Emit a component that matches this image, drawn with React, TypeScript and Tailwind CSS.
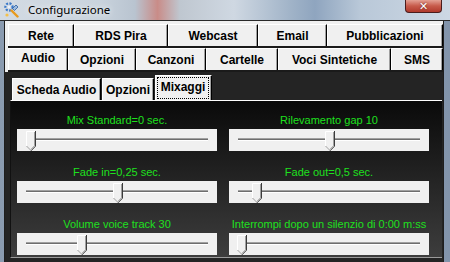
import React from "react";

const tabFont = "font-['Liberation_Sans',Arial,sans-serif] font-bold text-[12px] text-black";
const labelFont = "font-['Liberation_Sans',Arial,sans-serif] text-[11px]";

type Tab = { label: string; w: string; active?: boolean };

const row1: Tab[] = [
  { label: "Rete", w: "w-[66px]" },
  { label: "RDS Pira", w: "w-[94px]" },
  { label: "Webcast", w: "w-[90px]" },
  { label: "Email", w: "w-[69px]" },
  { label: "Pubblicazioni", w: "w-[116px]" },
];

const row2: Tab[] = [
  { label: "Audio", w: "w-[60px]", active: true },
  { label: "Opzioni", w: "w-[68px]" },
  { label: "Canzoni", w: "w-[70px]" },
  { label: "Cartelle", w: "w-[72px]" },
  { label: "Voci Sintetiche", w: "w-[113px]" },
  { label: "SMS", w: "w-[52px]" },
];

const sliders = [
  [
    { label: "Mix Standard=0 sec.", pos: "left-[9px]" },
    { label: "Rilevamento gap 10", pos: "left-[96px]" },
  ],
  [
    { label: "Fade in=0,25 sec.", pos: "left-[96px]" },
    { label: "Fade out=0,5 sec.", pos: "left-[23px]" },
  ],
  [
    { label: "Volume voice track 30", pos: "left-[60px]" },
    { label: "Interrompi dopo un silenzio di 0:00 m:ss", pos: "left-[8px]" },
  ],
];

function AppIcon() {
  return (
    <svg width="16" height="16" viewBox="0 0 16 16">
      <circle cx="5" cy="5" r="3.6" fill="none" stroke="#3a78c8" strokeWidth="2.2" strokeDasharray="2 1.4" />
      <circle cx="5" cy="5" r="1.3" fill="#e8f0fa" />
      <path d="M7.5 8.5 L13.5 14.5" stroke="#e89a1c" strokeWidth="2.4" strokeLinecap="round" />
      <path d="M12 3 L14 5 L10.5 8.5 L8.5 6.5 Z" fill="#9bbbe0" stroke="#2f5f9f" strokeWidth="0.8" />
      <circle cx="3" cy="13" r="1.6" fill="#f4c14a" />
    </svg>
  );
}

function OuterTab({ label, w, active }: Tab) {
  return (
    <div
      className={`${w} h-full flex items-center justify-center bg-[#f0f0f0] border-l border-t border-l-white border-t-white border-r border-r-black shadow-[inset_-1px_0_#a0a0a0] ${
        active ? "pb-[3px]" : ""
      } ${tabFont}`}
    >
      {label}
    </div>
  );
}

function InnerTab({ label, w, active }: Tab) {
  if (active) {
    return (
      <div className={`${w} h-[25px] bg-[#f0f0f0] border-l border-t border-l-white border-t-white border-r border-r-black shadow-[inset_-1px_0_#a0a0a0] p-[1px] pr-[2px]`}>
        <div className={`h-full border border-dotted border-black flex items-center justify-center pb-[2px] ${tabFont}`}>
          {label}
        </div>
      </div>
    );
  }
  return (
    <div
      className={`${w} h-[22px] flex items-center justify-center bg-[#f0f0f0] border-l border-t border-l-white border-t-white border-r border-r-black shadow-[inset_-1px_0_#a0a0a0] ${tabFont}`}
    >
      {label}
    </div>
  );
}

function Thumb({ className }: { className: string }) {
  return (
    <svg width="10" height="21" viewBox="0 0 10 21" className={className}>
      <path d="M0 0H10V15L5 20L0 15Z" fill="#f0f0f0" />
      <polyline points="0.5,15 0.5,0.5 9,0.5" fill="none" stroke="#ffffff" />
      <polyline points="0.5,15 5,19.5" fill="none" stroke="#a0a0a0" />
      <polyline points="8.5,1 8.5,14.8 5,18.3" fill="none" stroke="#a0a0a0" />
      <polyline points="9.5,0 9.5,15.2 5,19.8" fill="none" stroke="#3c3c3c" />
    </svg>
  );
}

function Slider({ label, pos }: { label: string; pos: string }) {
  return (
    <div className="w-[200px] flex flex-col">
      <div className={`h-[14px] leading-[14px] text-center text-[#1ee01e] whitespace-nowrap ${labelFont}`}>{label}</div>
      <div className="mt-[2px] h-[22px] bg-[#f0f0f0] relative">
        <div className="absolute left-[9px] right-[9px] top-[9px] h-[3px] border-t border-t-[#a0a0a0] bg-[#6e6e6e] border-b border-b-white" />
        <Thumb className={`absolute top-[2px] ${pos}`} />
      </div>
    </div>
  );
}

export default function App() {
  return (
    <div className="w-[450px] h-[262px] overflow-hidden flex flex-col bg-[linear-gradient(90deg,#8a9bb0,#a9b8c8_40%,#8294ab)]">
      {/* title bar */}
      <div className="h-[21px] flex items-start bg-[linear-gradient(90deg,#d3dbe3_0%,#c9d3dd_22%,#b9c4d0_30%,#c98c88_35%,#bfc7d0_40%,#cfd8e2_52%,#9fb2c7_65%,#8fa5bf_70%,#b9c8d8_80%,#cdd8e4_100%)] border-b border-b-[#2a2a2a]">
        <div className="ml-[4px] mt-[2px]">
          <AppIcon />
        </div>
        <div className="ml-[8px] mt-[1px] text-[11.5px] leading-[18px] text-black font-['Noto_Sans',sans-serif] [text-shadow:0_0_6px_#ffffff]">
          Configurazione
        </div>
        <div className="ml-auto mr-[8px] w-[37px] h-[13px] rounded-b-[4px] border border-t-0 border-[#4a1c1c] bg-[linear-gradient(180deg,#e4a194,#c75a4a_50%,#b0392c)] flex items-center justify-center text-white text-[11px] leading-none font-bold font-['DejaVu_Sans',sans-serif] [text-shadow:0_0_2px_#5a1a1a]">
          ✕
        </div>
      </div>

      <div className="flex-1 flex">
        <div className="w-[4px]" />
        {/* client area */}
        <div className="w-[440px] flex flex-col bg-[#f0f0f0] border-l border-r border-[#1e1e1e]">
          <div className="pt-[3px] pl-[3px]">
            <div className="flex h-[24px] border-b-2 border-b-[#1a1a1a]">
              {row1.map((t) => (
                <OuterTab key={t.label} {...t} />
              ))}
            </div>
            <div className="flex h-[24px] border-b-2 border-b-[#1a1a1a]">
              {row2.map((t) => (
                <OuterTab key={t.label} {...t} />
              ))}
            </div>
          </div>

          {/* Audio page */}
          <div className="flex-1 bg-[#242424] pl-[5px] pr-[1px] flex flex-col">
            <div className="flex items-end pl-[2px] pt-[3px] gap-[1px]">
              <InnerTab label="Scheda Audio" w="w-[89px]" />
              <InnerTab label="Opzioni" w="w-[52px]" />
              <InnerTab label="Mixaggi" w="w-[57px]" active />
            </div>
            <div className="w-[432px] h-[158px] border-t border-t-white border-l border-l-[#111] border-b border-b-[#9a9a9a] bg-[linear-gradient(180deg,#0a0a0a,#3d3d3d)] pt-[12px] pl-[6px] flex flex-col gap-[14px]">
              {sliders.map((row, i) => (
                <div key={i} className="flex gap-[12px]">
                  {row.map((s) => (
                    <Slider key={s.label} {...s} />
                  ))}
                </div>
              ))}
            </div>
          </div>
        </div>
        <div className="flex-1" />
      </div>
    </div>
  );
}
